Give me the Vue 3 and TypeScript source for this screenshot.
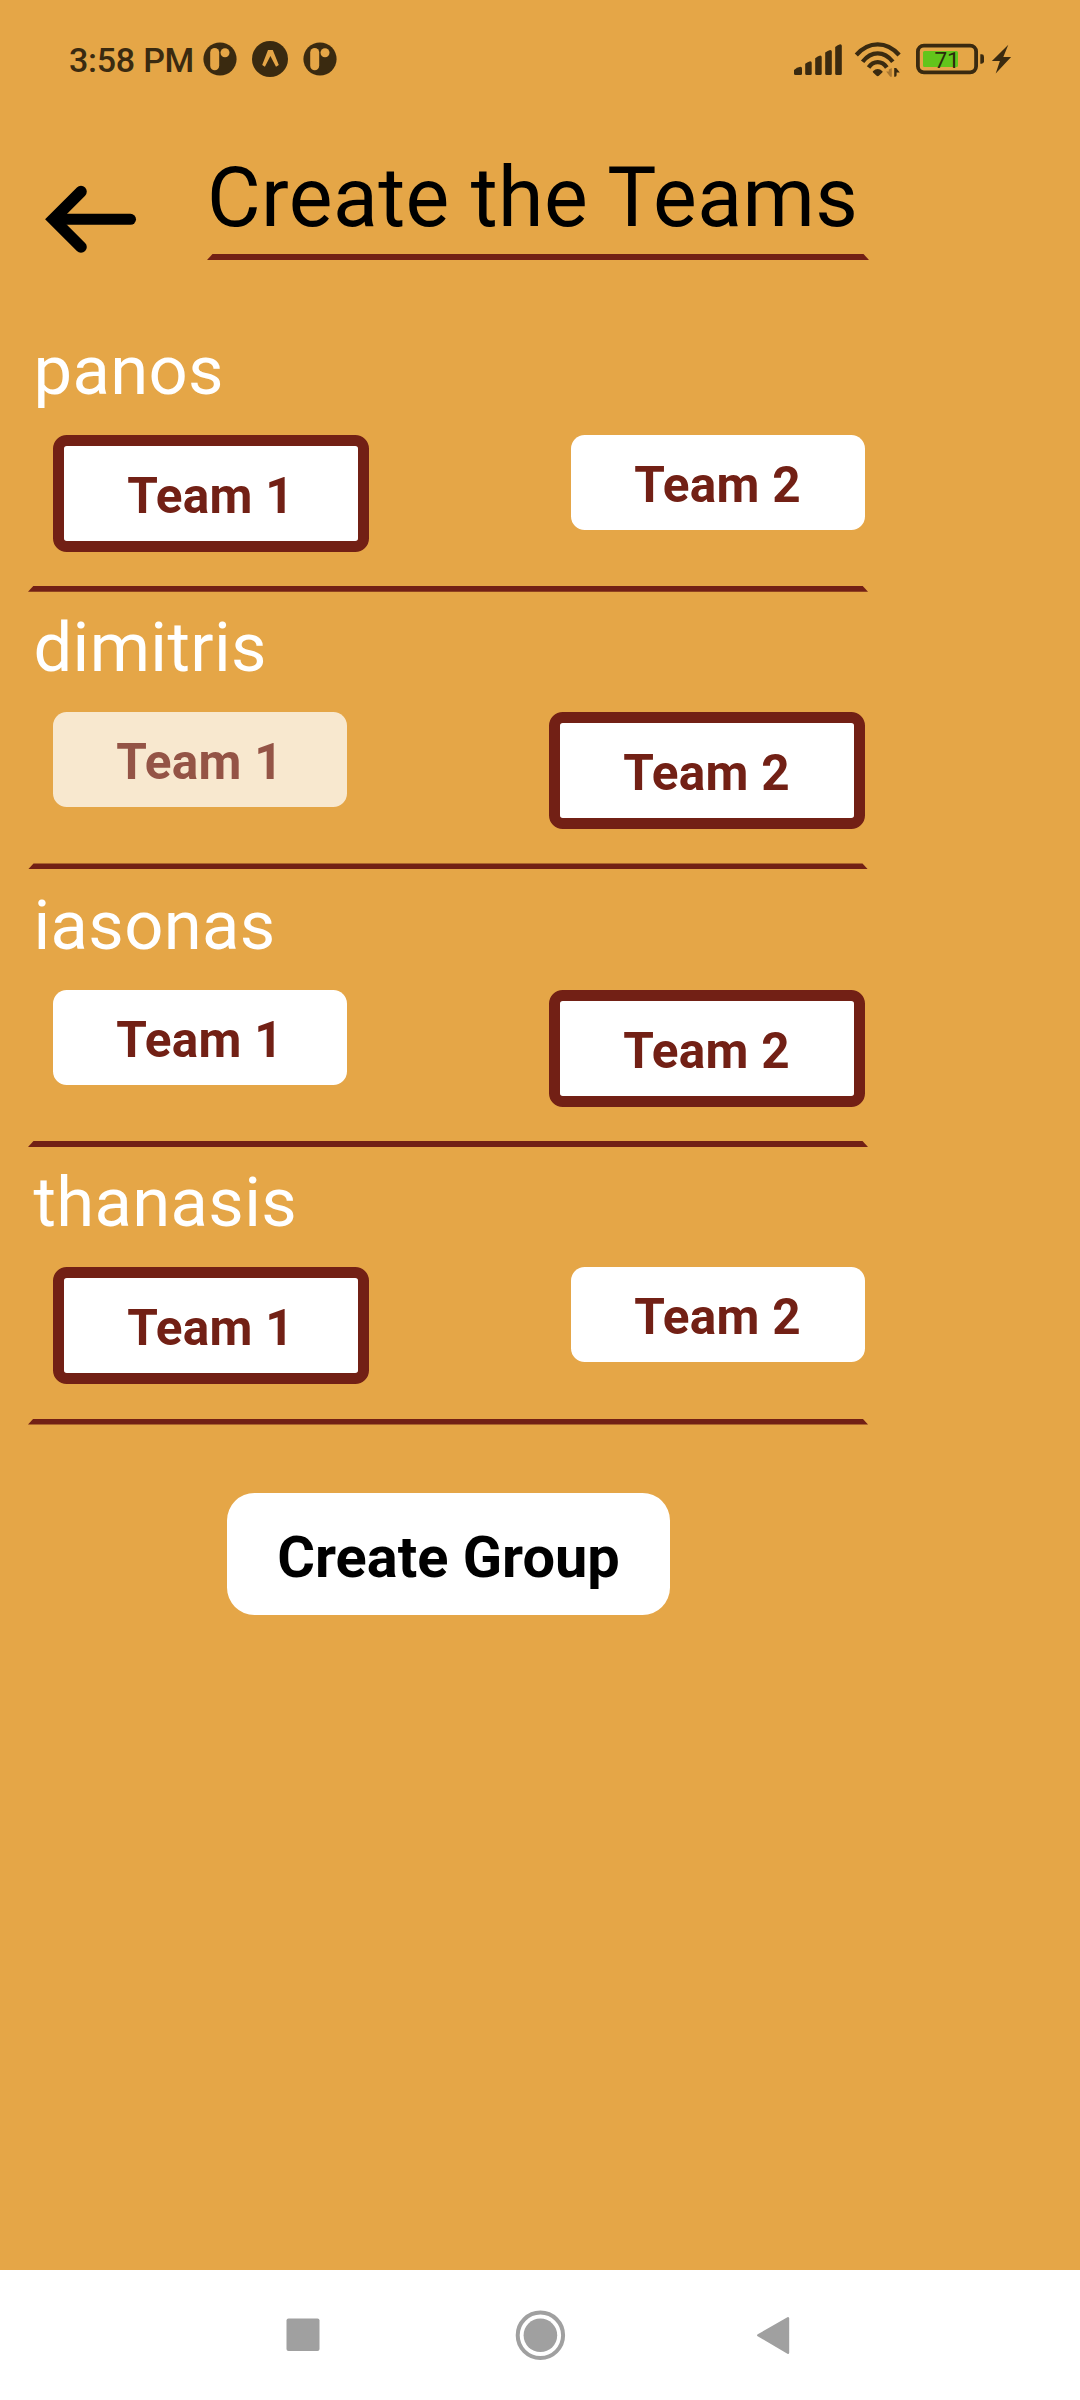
<script setup lang="ts">
interface Player {
  name: string
  team: 1 | 2
  pressed?: 1 | 2
}

const players: Player[] = [
  { name: 'panos', team: 1 },
  { name: 'dimitris', team: 2, pressed: 1 },
  { name: 'iasonas', team: 2 },
  { name: 'thanasis', team: 1 },
]
const teams = [1, 2] as const
</script>

<template>
  <div class="screen">
    <header class="status">
      <span class="time">3:58 PM</span>
      <svg class="notifications" width="136" height="40" viewBox="202 39 136 40">
        <g v-for="cx in [220, 320]" :key="cx" :transform="`translate(${cx} 59)`">
          <circle r="16.6" fill="#3a2a10" />
          <rect x="-9.8" y="-11" width="9" height="22.2" rx="4.5" fill="#e5a647" />
          <circle cx="5" cy="-6.2" r="4.5" fill="#e5a647" />
        </g>
        <circle cx="270" cy="59" r="18" fill="#3a2a10" />
        <path d="M268 50h4.8l6 15-2.8 1.7-5.6-10.7-5.5 10.7-2.7-1.7z" fill="#e5a647" />
      </svg>
      <svg class="system" width="230" height="40" viewBox="790 39 230 40">
        <g fill="#3a2a10">
          <path d="M794 73.5v-3.6q3-2.6 6.4-3.2 1.6 0 1.6 1.6v5.2q0 1.5-1.5 1.5h-5q-1.5 0-1.5-1.5z" />
          <path d="M805.2 73.5v-9.7q2.5-2 5-2.6 1.5 0 1.5 1.5v10.8q0 1.5-1.5 1.5h-3.5q-1.5 0-1.5-1.5z" />
          <path d="M815.2 73.5v-15.3q2.5-2 5-2.6 1.5 0 1.5 1.5v16.4q0 1.5-1.5 1.5h-3.5q-1.5 0-1.5-1.5z" />
          <path d="M825.2 73.5v-21q2.5-2 5-2.6 1.6 0 1.6 1.5v22.1q0 1.5-1.5 1.5h-3.6q-1.5 0-1.5-1.5z" />
          <path d="M835.2 73.5v-26.6q2.5-2 5-2.6 1.6 0 1.6 1.5v27.7q0 1.5-1.5 1.5h-3.6q-1.5 0-1.5-1.5z" />
          <path d="M872.9 71.2q4.8-4.6 9.6 0 .3.6-.2 1.2l-3.2 3.2q-1.4 1.1-2.8 0l-3.2-3.2q-.6-.6-.2-1.2z" />
          <path d="M894.2 76.7V68h2l3.6 4.6h-3.2v2.7q0 1.4-1.4 1.4z" />
          <path d="M980.3 54.3h1.3q2.4 0 2.4 2.4v4.6q0 2.4-2.4 2.4h-1.3z" />
          <path d="M1008.3 44.7l-16.4 16.3h8l-4.2 12.4 15.4-16.4h-7.8z" />
        </g>
        <path d="M891.8 68v8.7h-1.6l-4-5.3h2.6v-2z" fill="#a87630" />
        <g fill="none" stroke="#3a2a10" stroke-width="4.3">
          <path d="M856.3 55q9.4-10.6 21.4-10.6t21.4 10.6" />
          <path d="M862.6 61.7q6.5-8.4 15.1-8.4t15.1 8.4" />
          <path d="M868.6 67.5q3.7-5.4 9.1-5.4t9.1 5.4" />
          <rect x="917.9" y="45.6" width="58.2" height="26.7" rx="6" stroke-width="3.8" />
        </g>
        <rect x="923" y="51" width="35" height="16" rx="1.5" fill="#62c51b" />
        <text x="934.4" y="68" font-family="Roboto, sans-serif" font-size="22.5" fill="#2b2a0c">71</text>
      </svg>
    </header>

    <div class="heading">
      <svg class="back" width="100" height="80" viewBox="40 180 100 80" fill="none" stroke="#000" stroke-linecap="round">
        <path d="M81 191.6L53.3 219.3 81 247" stroke-width="11.6" stroke-miterlimit="10" />
        <path d="M56 219.3H130.5" stroke-width="11" />
      </svg>
      <div class="title-wrap">
        <h1>Create the Teams</h1>
        <div class="rule"></div>
      </div>
    </div>

    <main>
      <section v-for="p in players" :key="p.name" class="player">
        <div class="name">{{ p.name }}</div>
        <div class="buttons">
          <button
            v-for="t in teams"
            :key="t"
            class="team"
            :class="{ selected: p.team === t, pressed: p.pressed === t }"
          >Team {{ t }}</button>
        </div>
        <div class="rule"></div>
      </section>
      <button class="create">Create Group</button>
    </main>

    <nav>
      <svg width="1080" height="130" viewBox="0 2270 1080 130" fill="#a0a0a0">
        <rect x="286.5" y="2318.5" width="33" height="32.6" rx="2" />
        <circle cx="540.4" cy="2335.3" r="22.7" fill="none" stroke="#a0a0a0" stroke-width="4" />
        <circle cx="540.4" cy="2335.3" r="16.8" />
        <path d="M758.3 2335.3L788 2318.3V2352.7z" stroke="#a0a0a0" stroke-width="2.4" stroke-linejoin="round" />
      </svg>
    </nav>
  </div>
</template>

<style>
body {
  margin: 0;
}
</style>

<style scoped>
.screen {
  width: 1080px;
  height: 2400px;
  display: flex;
  flex-direction: column;
  background: #e5a647;
  font-family: Roboto, sans-serif;
  overflow: hidden;
}
svg {
  display: block;
  flex: none;
}
.status {
  height: 79px;
  display: flex;
  align-items: flex-end;
  box-sizing: border-box;
  padding-left: 69px;
  color: #3a2a10;
}
.time {
  width: 133px;
  font-size: 34px;
  line-height: 37px;
  font-weight: 500;
  letter-spacing: -0.25px;
  white-space: nowrap;
}
.system {
  margin-left: 452px;
}
.heading {
  height: 181px;
  display: flex;
  align-items: flex-end;
}
.back {
  margin-left: 40px;
}
.title-wrap {
  margin-left: 67px;
  width: 662px;
}
h1 {
  margin: 0;
  font-size: 82.5px;
  line-height: 112px;
  font-weight: 400;
  letter-spacing: 0.42px;
  color: #000;
  white-space: nowrap;
}
.rule {
  height: 6px;
  background: #722015;
  clip-path: polygon(5.5px 0, calc(100% - 5.5px) 0, 100% 100%, 0 100%);
}
main {
  flex: 1;
  padding: 54.2px 0 0 28px;
  width: 840px;
}
.player {
  height: 277.6px;
  display: flex;
  flex-direction: column;
}
.name {
  margin-top: 16.4px;
  height: 104px;
  padding-left: 5.5px;
  font-size: 68.75px;
  line-height: 80px;
  letter-spacing: 0.35px;
  color: #fff;
}
.buttons {
  flex: 1;
  display: flex;
  justify-content: space-between;
  align-items: flex-start;
  padding: 0 3px 0 25px;
}
button {
  margin: 0;
  border: 0;
  font-family: inherit;
  font-weight: 700;
  background: #fff;
}
.team {
  box-sizing: content-box;
  width: 293px;
  height: 89px;
  padding: 6px 1px 0 0;
  border-radius: 13.75px;
  font-size: 49.5px;
  line-height: 89px;
  letter-spacing: 0.25px;
  color: #722015;
}
.team.selected {
  border: 11px solid #722015;
}
.team.pressed {
  background: rgba(255, 255, 255, 0.74);
  color: rgba(114, 32, 21, 0.74);
}
.create {
  display: block;
  box-sizing: border-box;
  width: 443px;
  height: 122px;
  margin: 68px 0 0 199px;
  padding: 6px 0 0;
  border-radius: 27.5px;
  font-size: 57.75px;
  line-height: 116px;
  color: #000;
}
nav {
  height: 130px;
  background: #fff;
}
</style>
